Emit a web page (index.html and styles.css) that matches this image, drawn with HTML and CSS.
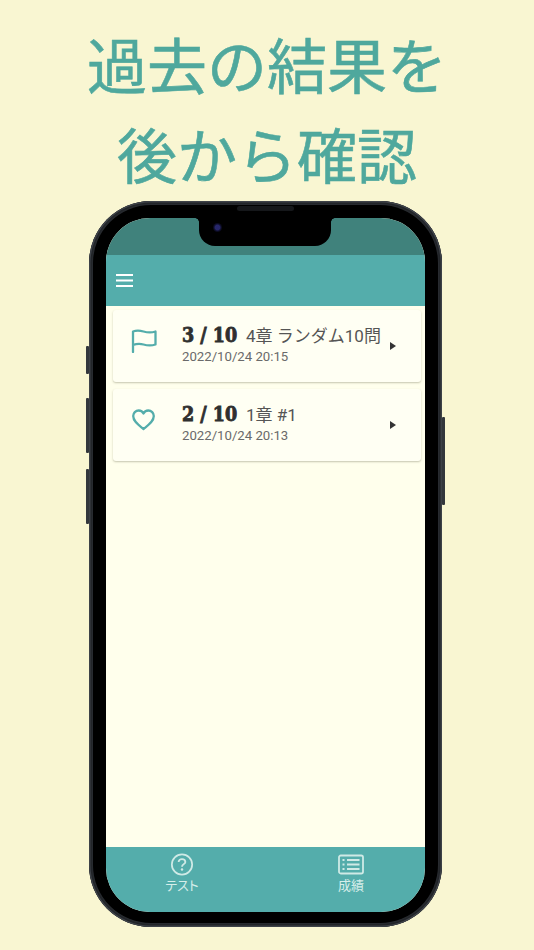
FILE: index.html
```html
<!DOCTYPE html>
<html lang="ja">
<head>
<meta charset="utf-8">
<title>過去の結果を後から確認</title>
<link rel="stylesheet" href="styles.css">
</head>
<body>
<h1 class="headline">過去の結果を<br>後から確認</h1>
<div class="phone">
  <span class="side side-mute"></span>
  <span class="side side-up"></span>
  <span class="side side-down"></span>
  <span class="side side-power"></span>
  <div class="bezel">
    <div class="notch"><span class="speaker"></span><span class="camera"></span></div>
    <div class="screen">
      <div class="statusbar"></div>
      <header class="appbar">
        <svg class="menu" width="17" height="13" viewBox="0 0 17 13"><path d="M0 1h17M0 6.500h17M0 12h17" stroke="#fff" stroke-width="1.800" fill="none"/></svg>
      </header>
      <main class="list">
        <article class="card card-first">
          <svg class="card-icon" width="26" height="24" viewBox="0 0 26 24"><path d="M2 23V2.500C6 1 9 1.500 12.500 2.500S20 4 24.500 2.500V15.500C20 17 16 16.500 12.500 15.500S6 14.500 2 16" fill="none" stroke="#54ADAB" stroke-width="2.300" stroke-linecap="round" stroke-linejoin="round"/></svg>
          <div class="card-text">
            <div class="card-title"><span class="score">3 / 10</span><span class="name">4章 ランダム10問</span></div>
            <div class="date">2022/10/24 20:15</div>
          </div>
          <span class="arrow"></span>
        </article>
        <article class="card">
          <svg class="card-icon" width="26" height="24" viewBox="0 0 26 24"><path d="M12.500 21C8 17.300 2.200 13.500 2.200 8A5.500 5.500 0 0 1 7.700 2.500C9.800 2.500 11.600 3.600 12.500 5.500C13.400 3.600 15.200 2.500 17.300 2.500A5.500 5.500 0 0 1 22.800 8C22.800 13.500 17 17.300 12.500 21Z" fill="none" stroke="#54ADAB" stroke-width="2.300" stroke-linejoin="round"/></svg>
          <div class="card-text">
            <div class="card-title"><span class="score">2 / 10</span><span class="name">1章 #1</span></div>
            <div class="date">2022/10/24 20:13</div>
          </div>
          <span class="arrow"></span>
        </article>
      </main>
      <nav class="tabbar">
        <div class="tab">
          <svg width="24" height="24" viewBox="0 0 24 24"><circle cx="12" cy="12" r="10.600" fill="none" stroke="#CFEAE6" stroke-width="1.800"/><path d="M8.500 9.500C8.500 7.400 10 6.300 12 6.300S15.500 7.500 15.500 9.300C15.500 11.500 12 11.800 12 14.300" fill="none" stroke="#CFEAE6" stroke-width="1.900"/><circle cx="12" cy="17.300" r="1.300" fill="#CFEAE6"/></svg>
          <span class="tab-label">テスト</span>
        </div>
        <div class="tab">
          <svg width="26" height="20" viewBox="0 0 26 20"><rect x="1" y="1" width="24" height="18" rx="1.800" fill="none" stroke="#CFEAE6" stroke-width="1.800"/><path d="M9 5.500h12.500M9 10h12.500M9 14.500h12.500" stroke="#CFEAE6" stroke-width="1.800" fill="none"/><path d="M4.500 5.500h2M4.500 10h2M4.500 14.500h2" stroke="#CFEAE6" stroke-width="2" fill="none"/></svg>
          <span class="tab-label">成績</span>
        </div>
      </nav>
    </div>
  </div>
</div>
</body>
</html>
```
FILE: styles.css
```css
* { box-sizing: border-box; }
html, body { margin: 0; padding: 0; }
body {
  width: 534px;
  height: 950px;
  overflow: hidden;
  background: #F9F6D2;
  font-family: Roboto, "Noto Sans CJK JP", sans-serif;
}
.headline {
  margin: 0;
  padding-top: 18px;
  height: 201px;
  text-align: center;
  font: 400 60px/90px "Noto Sans CJK JP", sans-serif;
  color: #4FA89D;
  -webkit-text-stroke: 0.6px #4FA89D;
}
.phone {
  position: relative;
  width: 353px;
  height: 726px;
  margin-left: 89px;
  padding: 4px;
  border-radius: 62px;
  background: #2b2e33;
  box-shadow: inset 0 0 0 1.500px #3e4248, inset 0 0 2px 3px #202327;
}
.bezel {
  position: relative;
  height: 718px;
  padding: 13px 13px 11px;
  border-radius: 58px;
  background: #000;
}
.side {
  position: absolute;
  width: 3px;
  background: #33373c;
  border-radius: 1px;
}
.side-mute { left: -3px; top: 145px; height: 28px; }
.side-up { left: -3px; top: 197px; height: 55px; }
.side-down { left: -3px; top: 268px; height: 55px; }
.side-power { right: -3px; top: 216px; height: 88px; }
.notch {
  position: absolute;
  top: 13px;
  left: 106px;
  width: 132px;
  height: 28px;
  background: #000;
  border-radius: 0 0 16px 16px;
}
.notch::before, .notch::after {
  content: "";
  position: absolute;
  top: 0;
  width: 4px;
  height: 4px;
}
.notch::before { left: -4px; background: radial-gradient(circle at 0 100%, transparent 3.500px, #000 4px); }
.notch::after { right: -4px; background: radial-gradient(circle at 100% 100%, transparent 3.500px, #000 4px); }
.speaker {
  position: absolute;
  left: 38px;
  top: -12px;
  width: 57px;
  height: 5px;
  border-radius: 3px;
  background: #15171a;
}
.camera {
  position: absolute;
  left: 14px;
  top: 5px;
  width: 9px;
  height: 9px;
  border-radius: 50%;
  background: radial-gradient(circle, #27276a 0 35%, #0b0b22 60%, #050510 100%);
}
.screen {
  display: flex;
  flex-direction: column;
  height: 694px;
  border-radius: 44px;
  overflow: hidden;
  background: #FFFFEC;
}
.statusbar { height: 37px; background: #40827C; flex: none; }
.appbar {
  height: 51px;
  flex: none;
  display: flex;
  align-items: center;
  padding-left: 10px;
  background: #54ADAB;
}
.list {
  flex: 1;
  padding: 3.500px 4.500px 0 7px;
  display: flex;
  flex-direction: column;
  gap: 7px;
}
.card {
  height: 72px;
  display: flex;
  align-items: center;
  padding-left: 18px;
  background: #FFFFF3;
  border-radius: 3px;
  box-shadow: 0 1px 2px rgba(90, 90, 60, .35);
}
.card-icon { flex: none; margin-top: -10px; }
.card-text { margin-left: 25px; width: 203px; margin-top: -2px; }
.card-title { display: flex; align-items: baseline; height: 24px; color: #333; }
.score {
  font: 900 19.500px/24px "DejaVu Serif Condensed", "DejaVu Serif", serif;
  font-stretch: condensed;
  -webkit-text-stroke: 0.8px #2f2f2f;
  color: #2f2f2f;
  width: 64px;
  flex: none;
  white-space: nowrap;
}
.name { font-size: 17px; line-height: 24px; color: #555; white-space: nowrap; }
.date { font-size: 13.200px; line-height: 17px; color: #6a6a6a; }
.arrow {
  width: 0;
  height: 0;
  margin-left: 5px;
  border-left: 6px solid #333;
  border-top: 4.500px solid transparent;
  border-bottom: 4.500px solid transparent;
}
.tabbar {
  height: 65px;
  flex: none;
  display: flex;
  gap: 109px;
  padding: 6px 0 0 46px;
  background: #54ADAB;
}
.tab {
  width: 60px;
  display: flex;
  flex-direction: column;
  align-items: center;
}
.tab svg { height: 23px; }
.tab-label {
  font-size: 13px;
  line-height: 16px;
  color: #D6EEEA;
  margin-top: 2px;
  font-feature-settings: "palt";
}
```
